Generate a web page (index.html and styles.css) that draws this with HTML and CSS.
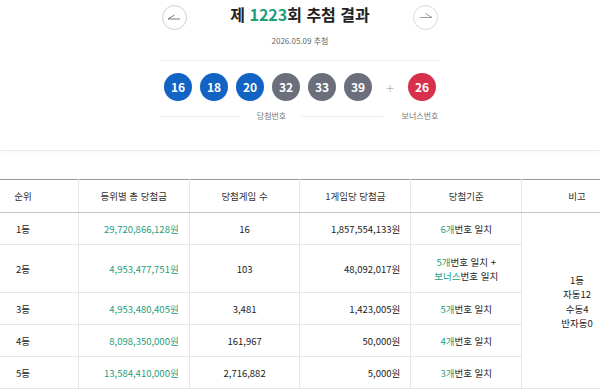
FILE: index.html
```html
<!DOCTYPE html>
<html lang="ko">
<head>
<meta charset="utf-8">
<link rel="stylesheet" href="styles.css">
</head>
<body>
<section class="draw">
  <div class="head">
    <button class="nav" aria-label="이전">
      <svg viewBox="0 0 25 25" width="25" height="25"><circle cx="12.5" cy="12.5" r="12" fill="none" stroke="#cfcfcf"/><path d="M6 14 H18 M6 14 L12.5 10" fill="none" stroke="#7a7a7a" stroke-width="1"/></svg>
    </button>
    <h1 class="title">제 <span class="accent">1223</span>회 추첨 결과</h1>
    <button class="nav" aria-label="다음">
      <svg viewBox="0 0 25 25" width="25" height="25"><circle cx="12.5" cy="12.5" r="12" fill="none" stroke="#d8d8d8"/><path d="M7 12.5 H19 M19 12.5 L12.5 8.5" fill="none" stroke="#9a9a9a" stroke-width="1"/></svg>
    </button>
  </div>
  <p class="date">2026.05.09 추첨</p>
  <div class="divider"></div>
  <div class="balls">
    <span class="ball blue">16</span>
    <span class="ball blue">18</span>
    <span class="ball blue">20</span>
    <span class="ball gray">32</span>
    <span class="ball gray">33</span>
    <span class="ball gray">39</span>
    <span class="plus">+</span>
    <span class="ball red">26</span>
  </div>
  <div class="labels">
    <div class="label-main"><span>당첨번호</span></div>
    <div class="label-bonus">보너스번호</div>
  </div>
</section>

<div class="table-wrap">
  <table class="prize">
    <thead>
      <tr>
        <th>순위</th>
        <th>등위별 총 당첨금</th>
        <th>당첨게임 수</th>
        <th>1게임당 당첨금</th>
        <th>당첨기준</th>
        <th>비고</th>
      </tr>
    </thead>
    <tbody>
      <tr>
        <td>1등</td>
        <td class="money">29,720,866,128원</td>
        <td>16</td>
        <td class="right">1,857,554,133원</td>
        <td><span class="accent">6개</span>번호 일치</td>
        <td class="note" rowspan="5">1등<br>자동12<br>수동4<br>반자동0</td>
      </tr>
      <tr class="tall">
        <td>2등</td>
        <td class="money">4,953,477,751원</td>
        <td>103</td>
        <td class="right">48,092,017원</td>
        <td><span class="accent">5개</span>번호 일치 +<br><span class="accent">보너스</span>번호 일치</td>
      </tr>
      <tr>
        <td>3등</td>
        <td class="money">4,953,480,405원</td>
        <td>3,481</td>
        <td class="right">1,423,005원</td>
        <td><span class="accent">5개</span>번호 일치</td>
      </tr>
      <tr>
        <td>4등</td>
        <td class="money">8,098,350,000원</td>
        <td>161,967</td>
        <td class="right">50,000원</td>
        <td><span class="accent">4개</span>번호 일치</td>
      </tr>
      <tr>
        <td>5등</td>
        <td class="money">13,584,410,000원</td>
        <td>2,716,882</td>
        <td class="right">5,000원</td>
        <td><span class="accent">3개</span>번호 일치</td>
      </tr>
    </tbody>
  </table>
</div>
</body>
</html>
```

FILE: styles.css
```css
html { overflow: hidden; }
body {
  margin: 0;
  background: #fff;
  color: #222;
  font-family: "Noto Sans CJK KR", "Noto Sans", sans-serif;
}
.accent { color: #1f9e7c; }

.draw {
  padding-top: 4px;
  padding-bottom: 29px;
  border-bottom: 1px solid #ececec;
  box-shadow: 0 1px 3px rgba(0, 0, 0, 0.04);
}
.head {
  width: 276px;
  height: 26px;
  margin: 0 auto;
  display: flex;
  justify-content: space-between;
  align-items: center;
}
.nav {
  width: 25px;
  height: 25px;
  padding: 0;
  border: 0;
  background: none;
  display: block;
}
.nav svg { display: block; }
.title {
  margin: -6px 0 0;
  font-size: 16px;
  line-height: 20px;
  font-weight: 700;
  color: #222;
}
.date {
  margin: 6px 0 0;
  text-align: center;
  font-size: 8px;
  line-height: 10px;
  color: #666;
}
.divider {
  width: 280px;
  height: 1px;
  margin: 14px auto 0;
  background: #efefef;
}
.balls {
  margin-top: 12px;
  display: flex;
  justify-content: center;
  align-items: center;
  gap: 8px;
}
.ball {
  width: 28px;
  height: 28px;
  border-radius: 50%;
  display: flex;
  align-items: center;
  justify-content: center;
  color: #fff;
  font-size: 12px;
  font-weight: 700;
  line-height: 1;
}
.blue { background: #1163c4; }
.gray { background: #6b6f7b; }
.red { background: #d8304b; }
.plus {
  width: 20px;
  text-align: center;
  color: #b5b5b5;
  font-size: 15px;
  font-weight: 300;
}
.labels {
  width: 280px;
  margin: 10px auto 0;
  display: flex;
  align-items: center;
  gap: 17px;
  font-size: 8px;
  line-height: 10px;
  color: #777;
}
.label-main {
  width: 223px;
  display: flex;
  align-items: center;
  justify-content: center;
  background: linear-gradient(#ececec, #ececec) no-repeat 0 50% / 100% 1px;
}
.label-main span {
  background: #fff;
  padding: 0 16px;
}
.label-bonus {
  width: 40px;
  text-align: center;
  white-space: nowrap;
}

.table-wrap {
  margin-top: 28px;
  display: flex;
  justify-content: center;
  overflow: hidden;
}
.prize {
  flex: none;
  width: 666px;
  table-layout: fixed;
  border-collapse: collapse;
  border-top: 1px solid #9a9a9a;
  font-size: 9.5px;
  color: #222;
}
.prize th,
.prize td {
  height: 32px;
  padding: 0 10px;
  border-left: 1px solid #e6e6e6;
  border-right: 1px solid #e6e6e6;
  border-bottom: 1px solid #e6e6e6;
  text-align: center;
  line-height: 14px;
  box-sizing: border-box;
}
.prize th {
  height: 33px;
  font-weight: 400;
  color: #333;
  border-bottom: 1px solid #c4c4c4;
}
.prize tr.tall td { height: 48px; }
.prize td.money { text-align: right; color: #1f9e7c; }
.prize td.right { text-align: right; }
.prize td.note { line-height: 14.5px; padding-top: 2px; }
```
